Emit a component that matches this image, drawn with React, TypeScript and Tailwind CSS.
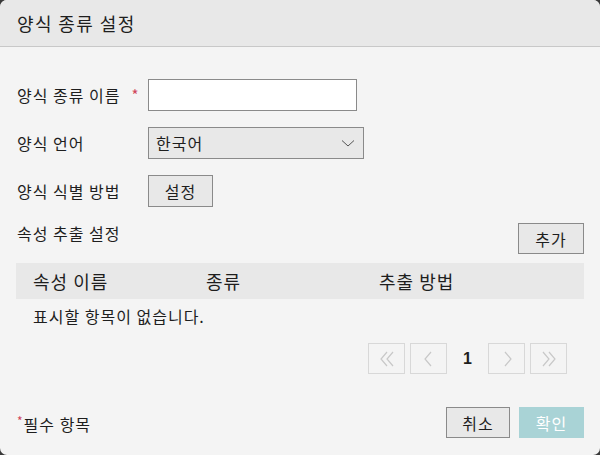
import React from 'react';

const font = { fontFamily: '"Noto Sans CJK KR", "Noto Sans", sans-serif' };

function Chevron({ dir }: { dir: 'l' | 'r' | 'll' | 'rr' }) {
    const paths: Record<string, string> = {
        l: 'M12 3 L6 10 L12 17',
        r: 'M8 3 L14 10 L8 17',
        ll: 'M10 3 L4 10 L10 17 M16 3 L10 10 L16 17',
        rr: 'M4 3 L10 10 L4 17 M10 3 L16 10 L10 17',
    };
    return (
        <svg width="20" height="20" viewBox="0 0 20 20" fill="none" stroke="#c8c8c8" strokeWidth="1.2">
            <path d={paths[dir]} />
        </svg>
    );
}

export default function App() {
    return (
        <div className='w-[600px] h-[455px] bg-[#3a3a3a] text-[#1e1e1e] text-[16px] tracking-[1px]' style={font}>
            <div className='w-full h-full bg-[#f4f4f4] rounded-[7px] overflow-hidden flex flex-col'>
                {/* Header */}
                <div className='h-[47px] bg-[#e8e8e8] border-b border-[#c8c8c8] flex items-center px-[17px] text-[18px] tracking-[1.4px] shrink-0'>
                    양식 종류 설정
                </div>

                {/* Body */}
                <div className='flex flex-col pt-[32px] px-[16px]'>
                    <div className='flex items-center h-[32px]'>
                        <div className='w-[132px] pl-[1px] whitespace-nowrap flex items-center'>
                            양식 종류 이름<span className='text-[#d0455a] text-[15px] ml-[11px] mt-[1px]'>*</span>
                        </div>
                        <input className='w-[209px] h-[32px] bg-white border border-[#8a8a8a] outline-none' />
                    </div>
                    <div className='flex items-center h-[32px] mt-[16px]'>
                        <div className='w-[132px] pl-[1px]'>양식 언어</div>
                        <div className='w-[216px] h-[32px] bg-[#e8e8e8] border border-[#8a8a8a] flex items-center justify-between pl-[7px] pr-[8px]'>
                            <span>한국어</span>
                            <svg width="14" height="10" viewBox="0 0 14 10" fill="none" stroke="#555" strokeWidth="1">
                                <path d="M1 2.5 L7 8 L13 2.5" />
                            </svg>
                        </div>
                    </div>
                    <div className='flex items-center h-[32px] mt-[16px]'>
                        <div className='w-[132px] pl-[1px]'>양식 식별 방법</div>
                        <button className='w-[65px] h-[32px] bg-[#e8e8e8] border border-[#8a8a8a]'>설정</button>
                    </div>
                    <div className='flex justify-between items-start mt-[16px] pl-[1px]'>
                        <div className='leading-[20px]'>속성 추출 설정</div>
                        <button className='w-[66px] h-[31px] bg-[#e8e8e8] border border-[#8a8a8a]'>추가</button>
                    </div>
                    <div className='mt-[9px] h-[36px] bg-[#e8e8e8] flex items-center pl-[17px] text-[18px]'>
                        <div className='w-[173px]'>속성 이름</div>
                        <div className='w-[173px]'>종류</div>
                        <div>추출 방법</div>
                    </div>
                    <div className='pl-[17px] mt-[7px] leading-[20px]'>표시할 항목이 없습니다.</div>

                    <div className='flex justify-end items-center mt-[17px] gap-[5px] pr-[17px]'>
                        <div className='w-[37px] h-[31px] border border-[#d8d8d8] flex items-center justify-center'><Chevron dir='ll' /></div>
                        <div className='w-[37px] h-[31px] border border-[#d8d8d8] flex items-center justify-center'><Chevron dir='l' /></div>
                        <div className='w-[31px] text-center font-bold text-[16px] tracking-normal' style={{ fontFamily: '"Liberation Sans", Arial, sans-serif' }}>1</div>
                        <div className='w-[37px] h-[31px] border border-[#d8d8d8] flex items-center justify-center'><Chevron dir='r' /></div>
                        <div className='w-[37px] h-[31px] border border-[#d8d8d8] flex items-center justify-center'><Chevron dir='rr' /></div>
                    </div>

                    <div className='flex justify-between items-center mt-[33px]'>
                        <div className='pl-[1px] mt-[2px]'><span className='text-[#d0455a] text-[12px] align-top'>*</span>필수 항목</div>
                        <div className='flex gap-[9px]'>
                            <button className='w-[64px] h-[31px] bg-[#e8e8e8] border border-[#8a8a8a]'>취소</button>
                            <button className='w-[65px] h-[31px] bg-[#a9d3d6] text-white'>확인</button>
                        </div>
                    </div>
                </div>
            </div>
        </div>
    );
}
